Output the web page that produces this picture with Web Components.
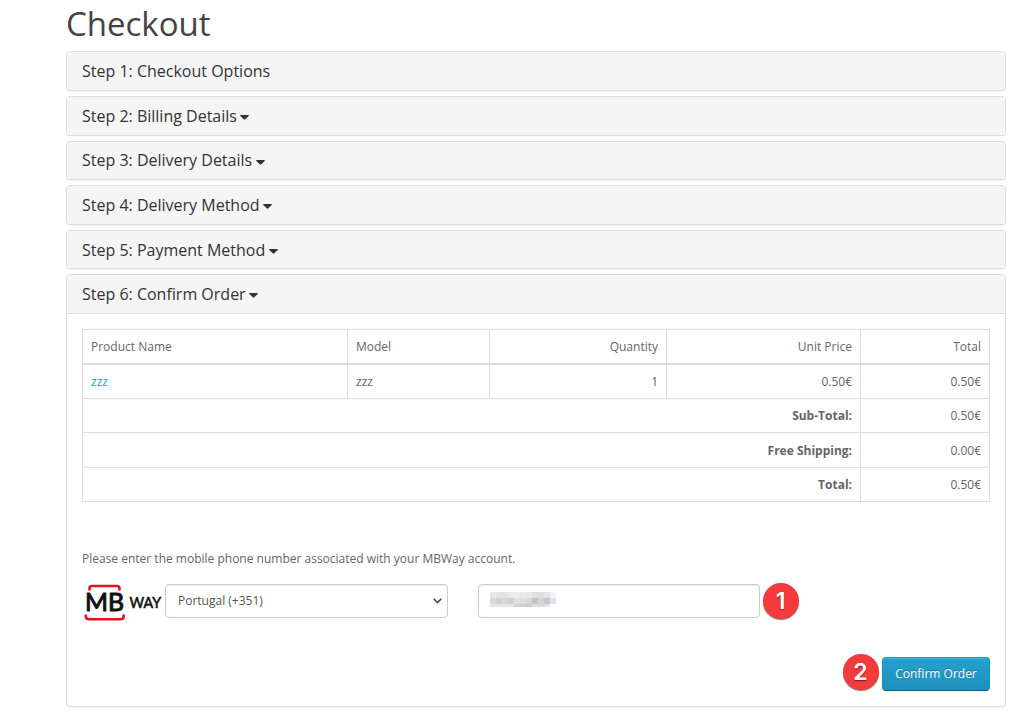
<!DOCTYPE html>
<html lang="en"><head><meta charset="utf-8"><title>Checkout</title>
<style>
body{margin:0;background:#fff;font:400 12px/17.14px "Open Sans",sans-serif;color:#666}
</style></head><body>
<checkout-page></checkout-page>
<script>
const define=(name,html,setup)=>customElements.define(name,class extends HTMLElement{
  connectedCallback(){
    if(this.shadowRoot)return;
    const t=document.createElement('template');t.innerHTML=html;
    this.attachShadow({mode:'open'}).append(t.content.cloneNode(true));
    if(setup)setup(this,this.shadowRoot);
  }
});

define('step-panel',`<style>
:host{display:block;border:1px solid #ddd;border-radius:4px;box-shadow:0 1px 1px rgba(0,0,0,.05);background:#fff;box-sizing:border-box}
header{background:#f5f5f5;padding:10.800px 15px 9.200px;border-radius:3px;height:17.6px}
h4{margin:0;font-size:16px;line-height:17.6px;font-weight:400;color:#333;white-space:nowrap}
svg{display:none;width:9px;height:5px;vertical-align:middle;margin-left:3.500px}
:host([caret]) svg{display:inline-block}
.body{display:none}
:host([open]) .body{display:block;border-top:1px solid #ddd;padding:15px}
</style><header><h4><slot name="title"></slot><svg viewBox="0 0 9 5"><path d="M.6 0h7.800q.8.200.3.900L5 4.600q-.5.400-1 0L.3.900Q-.2.200.6 0z" fill="#333"/></svg></h4></header><div class="body"><slot></slot></div>`);

define('order-table',`<style>
:host{display:block;height:173px}
table{width:908px;table-layout:fixed;border-collapse:collapse}
td{border:1px solid #ddd;padding:0 8px;height:33.14px;box-sizing:content-box}
thead td{border-bottom-width:2px}
.ship td{height:34px}.total td{height:33px}
.r{text-align:right}a{color:#23a1d1;text-decoration:none}
</style><table><colgroup><col style="width:265px"><col style="width:142px"><col style="width:177px"><col style="width:194px"><col style="width:129px"></colgroup>
<thead><tr><td>Product Name</td><td>Model</td><td class="r">Quantity</td><td class="r">Unit Price</td><td class="r">Total</td></tr></thead>
<tbody><tr><td><a>zzz</a></td><td>zzz</td><td class="r">1</td><td class="r">0.50€</td><td class="r">0.50€</td></tr>
<tr><td colspan="4" class="r"><b>Sub-Total:</b></td><td class="r">0.50€</td></tr>
<tr class="ship"><td colspan="4" class="r"><b>Free Shipping:</b></td><td class="r">0.00€</td></tr>
<tr class="total"><td colspan="4" class="r"><b>Total:</b></td><td class="r">0.50€</td></tr></tbody></table>`);

define('mbway-logo',`<style>:host{display:block;width:83px;height:44px}svg{display:block}</style>
<svg width="83" height="44" viewBox="0 0 83 44">
<g fill="none" stroke="#e0131f" stroke-width="2.600" stroke-linecap="round"><path d="M7.500 10.500V9.500q0-2.500 2.500-2.500h25q2.500 0 2.500 2.500v1"/><path d="M3.800 36.500v.8q0 3 3.200 3h31.500q3.200 0 3.200-3v-.8"/></g>
<g fill="#111" stroke="#111" font-family="Lato,sans-serif"><text x="3" y="32.300" font-size="24.500" font-weight="400" stroke-width="1" textLength="39" lengthAdjust="spacingAndGlyphs">MB</text><text x="47.500" y="28.500" font-size="15" font-weight="400" stroke-width=".6" textLength="31.500" lengthAdjust="spacingAndGlyphs">WAY</text></g></svg>`);

define('form-box',`<style>
:host{display:flex;align-items:center;box-sizing:border-box;height:34px;width:283px;border:1px solid #ccc;border-radius:4px;padding:0 5px 0 12px;box-shadow:inset 0 1px 1px rgba(0,0,0,.075);color:#555;justify-content:space-between}
</style><slot></slot>`);

define('redacted-value',`<style>:host{display:block;width:66px;height:15px;margin-left:-1px;margin-top:-3px}svg{display:block}</style>
<svg width="66" height="15" shape-rendering="crispEdges"></svg>`,(h,r)=>{
  const rows=[
   ['#e5e5e5','#e4e4e4','#e3e3e4','#e8e8e8','#ededed','#e9e9e9','#e8e8e8','#e1e1e1','#dfdfdf','#e5e5e6','#f3f4f6'],
   ['#dcd9cf','#d0d2d8','#d8d8da','#cfcfd0','#dfe1e0','#dcdedd','#d9d9dc','#c8c0bf','#d7d4cf','#c5c7cf','#dfe0e4'],
   ['#e8e7e2','#e6e7ea','#e7e7e7','#e4e4e4','#cfd0d1','#cccfd1','#c8cdd0','#dedfdf','#dad9d7','#e0e1e4','#ffffff']];
  const ys=[[0,6],[6,6],[12,3]];
  r.querySelector('svg').innerHTML=rows.map((row,y)=>row.map((c,x)=>`<rect x="${x*6}" y="${ys[y][0]}" width="6" height="${ys[y][1]}" fill="${c}"/>`).join('')).join('');
});

define('number-badge',`<style>:host{display:flex;align-items:center;justify-content:center;box-sizing:border-box;padding:1px 1px 0 0;width:36px;height:36px;border-radius:50%;background:#f33b3b;box-shadow:0 1px 1px rgba(0,0,0,.5);color:#fff;font:600 23px/35px Inter,sans-serif;text-shadow:0 1px 1px rgba(0,0,0,.5)}</style><slot></slot>`);

define('primary-button',`<style>:host{display:block}
button{display:block;box-sizing:border-box;width:108px;height:34px;padding:0;border:1px solid;border-color:#1f90bb #1f90bb #145e7a;border-radius:4px;background:linear-gradient(#23a1d1,#1f90bb);box-shadow:inset 0 1px 0 rgba(255,255,255,.2),0 1px 2px rgba(0,0,0,.05);color:#fff;font:inherit;text-shadow:0 -1px 0 rgba(0,0,0,.25)}
</style><button type="button"><slot></slot></button>`);

define('checkout-page',`<style>
:host{display:block;box-sizing:border-box;width:1035px;height:719px;padding:6.400px 29px 0 66px;overflow:hidden}
h1{margin:0 0 9px;font-size:33px;line-height:36px;font-weight:400;color:#444}
.steps{display:flex;flex-direction:column;gap:5px}
step-panel[open]{height:433px}
p{margin:48px 0 0;height:17px}
.phone{display:flex;align-items:center;margin-top:12px;height:44px}
.phone form-box+form-box{margin-left:30px;width:282px}
number-badge{flex:none}
.phone number-badge{margin-left:3px}
.actions{display:flex;justify-content:flex-end;align-items:flex-end;gap:3px;margin-top:31px;height:37px}
.actions number-badge{margin-bottom:1px}
</style>
<h1>Checkout</h1>
<div class="steps">
<step-panel><span slot="title">Step 1: Checkout Options</span></step-panel>
<step-panel caret><span slot="title">Step 2: Billing Details</span></step-panel>
<step-panel caret><span slot="title">Step 3: Delivery Details</span></step-panel>
<step-panel caret><span slot="title">Step 4: Delivery Method</span></step-panel>
<step-panel caret><span slot="title">Step 5: Payment Method</span></step-panel>
<step-panel caret open><span slot="title">Step 6: Confirm Order</span>
<order-table></order-table>
<p>Please enter the mobile phone number associated with your MBWay account.</p>
<div class="phone"><mbway-logo></mbway-logo><form-box><span>Portugal (+351)</span><svg width="9" height="6" viewBox="0 0 9 6"><path d="M.7.8l3.800 3.800L8.300.8" fill="none" stroke="#444" stroke-width="1.500"/></svg></form-box><form-box><redacted-value></redacted-value></form-box><number-badge>1</number-badge></div>
<div class="actions"><number-badge>2</number-badge><primary-button>Confirm Order</primary-button></div>
</step-panel></div>`);
</script></body></html>
